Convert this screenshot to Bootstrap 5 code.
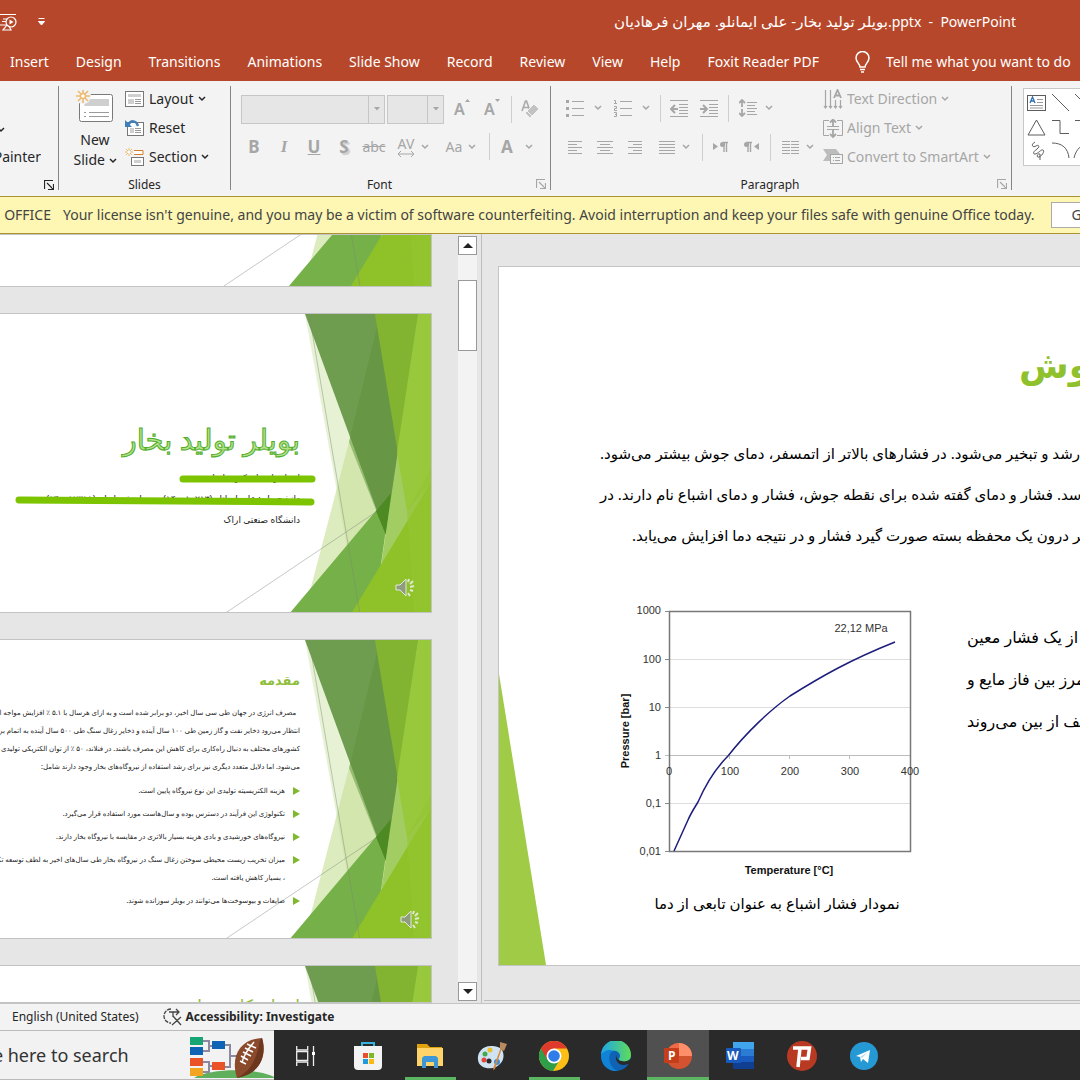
<!DOCTYPE html>
<html lang="en">
<head>
<meta charset="utf-8">
<meta name="viewport" content="width=device-width, initial-scale=1">
<title>PowerPoint</title>
<link href="https://cdn.jsdelivr.net/npm/bootstrap@5.3.0/dist/css/bootstrap.min.css" rel="stylesheet">
<style>
body{font-family:"Noto Sans","DejaVu Sans",sans-serif;font-size:14px;line-height:20px;color:#262626;background:#e6e6e6}
.btn{--bs-btn-font-size:14px;--bs-btn-line-height:20px;--bs-btn-padding-x:0px;--bs-btn-padding-y:0px;--bs-btn-border-width:0px;--bs-btn-border-radius:0;--bs-btn-color:inherit;--bs-btn-disabled-opacity:1;--bs-btn-disabled-color:#a6a6a6;white-space:nowrap}
svg{flex:none;display:block}
.app-head{background:#b7472a;color:#fff}
.title-row{height:43px}
.title-row .doc-name{margin-right:64px}
.doc-name span{font-size:15px}
.tab-row{height:38px;padding-left:10px;gap:27px}
.tell{gap:15px;margin-left:8px}
.ribbon{background:#f3f3f3;height:115px;padding:5px 0}
.rgroup{border-right:1px solid #868686;height:104px}
.rgroup>:first-child{min-height:0}
.rlabel{font-size:12px;line-height:16px;color:#262626;margin-bottom:-3px}
.g-clip{width:59px}.g-slides{width:172px}.g-font{width:320px}.g-para{width:461px}
.off{color:#a6a6a6}
.ib{width:30px;height:30px;display:flex;align-items:center;justify-content:center}
.ib.wide{width:48px;gap:6px}
.vsep{width:8px;height:27px;display:flex;justify-content:center}
.vsep::before{content:"";width:1px;background:#cfcfcf}
.combo{height:29px;border:1px solid #c6c6c6;background:#e6e6e6}
.combo select{appearance:none;border:0;background:transparent;min-width:0}
.combo span{width:16px;border-left:1px solid #c6c6c6;display:flex;align-items:center;justify-content:center}
.gl{font-size:17px;font-weight:700}
.shade{text-shadow:2px 2px 1px #ccc}
.shapes{height:78px;border:1px solid #c8c8c8;background:#fff}
.msg{background:#fdf7b3;border-top:1px solid #ac9135;border-bottom:1px solid #ac9135;height:38px;color:#444}
.msg .lead-word{width:51px}
.msg .btn{background:#fff;border:1px solid #ababab;height:26px;padding-left:19px;width:160px}
.pane{width:482px;border-right:1px solid #bdbdbd}
.thumbs{width:432px;gap:26px}
.thumb{height:300px;width:432px;background:#fff;border:1px solid #c3c3c3;border-left:0;overflow:hidden;position:relative;flex:none;direction:rtl}
.thumb .art{position:absolute;right:0;top:0}
.thumb.first{height:53px}.thumb.first .art{top:auto;bottom:0}
.thumb.last{flex:1 1 0;min-height:0}
.thumb .txt{position:relative;padding-right:131px;white-space:nowrap;color:#222}
.art-title{font-size:29px;line-height:40px;color:#b5e08a;-webkit-text-stroke:1px #4fae2c}
.tiny{font-size:9px;line-height:21px}
.thumb .green{color:#8fbe3a}
.para{font-size:7px;line-height:18px}
.para ul{list-style:none;padding:0;margin:0}
.para li{padding-right:15px;position:relative;margin-bottom:5px}
.para li::before{content:"";position:absolute;right:0;top:5px;border:4px solid transparent;border-left:7px solid #7fb92e;border-right:0}
.sbar{width:19px;background:#f3f3f3;margin:2px 0 2px}
.sbar .btn{height:19px;border:1px solid #999;background:#fff;display:flex;align-items:center;justify-content:center}
.sbar .grip{height:71px;border:1px solid #999;background:#fff;margin-top:25px}
.stage{padding:32px 0 0 16px;overflow:hidden;min-width:0}
.slide{height:700px;width:1244px;background:#fff;border:1px solid #c3c3c3;position:relative;color:#000}
.slide .wedge{position:absolute;left:0;bottom:0}
.rt{direction:rtl;white-space:nowrap;width:max-content}
.s-title{font-size:36px;line-height:60px;font-weight:700;color:#8fc12c;margin-left:520px;padding-top:68px}
.s-body{font-size:15px;line-height:41px;margin-left:101px;padding-top:38px}
.s-row{padding:44px 0 0 113px;gap:41px}
.s-side{font-size:16px;line-height:42px;padding-top:16px}
.s-cap{font-size:15px;line-height:28px}
.rule{border-top:1px solid #bdbdbd;margin:34px 0 0 -14px}
.status{height:27px;background:#f3f3f3;border-top:1px solid #c4c4c4;font-size:12px}
.task{height:50px;background:#2a2a2a}
.search{width:274px;margin-right:1px;background:#f2f2f2;border-top:1px solid #bbb;border-bottom:1px solid #bbb}
.search input{border:0;background:transparent;font-size:18px;width:215px;margin-left:-37px;padding:0;color:#333;outline:0}
.search input::placeholder{color:#333;opacity:1}
.slot{width:62px;display:flex;align-items:center;justify-content:center;position:relative;padding-top:1px}
.slot.run::after,.slot.live::after{content:"";position:absolute;left:6px;right:5px;bottom:0;height:3px;background:#5bb662}
.slot.live{background:#505050}.slot.live::after{left:0;right:0}
</style>
<script src="https://cdn.jsdelivr.net/npm/bootstrap@5.3.0/dist/js/bootstrap.bundle.min.js"></script>
</head>
<body class="vh-100 overflow-hidden d-flex flex-column">
<svg width="0" height="0" class="position-absolute" aria-hidden="true">
<symbol id="chev" viewBox="0 0 8 6"><path d="M1 1l3 3 3-3" fill="none" stroke="currentColor" stroke-width="1.5"/></symbol>
<symbol id="launch" viewBox="0 0 10 10"><path d="M.5 9V.5H9M9.5 4v5.500H4M3 3l6 6" fill="none" stroke="currentColor" stroke-width="1.2"/></symbol>
<symbol id="tri" viewBox="0 0 6 4"><path d="M0 0h6L3 3.500z" fill="currentColor"/></symbol>
<symbol id="facet" viewBox="0 0 432 300">
<path d="M381 0L350 128 305 300H385L432 150V0z" fill="#dcecbe"/>
<path d="M306 0L360 300H432V0z" fill="#c4df95" opacity=".4"/>
<path d="M290 300L392 179 375 300z" fill="#75b148"/>
<path d="M306 0H420L387 221z" fill="#6f9d50"/>
<path d="M381 0L350 128 387 221 420 0z" fill="#5f913a" opacity=".5"/>
<path d="M377 197L392 179 387 221z" fill="#4d8a23"/>
<path d="M419 0H432V300H375z" fill="#a2cd62"/>
<path d="M376 0H419L400 146z" fill="#82b431"/>
<path d="M419 0H432V168L408 197 398 138z" fill="#98c83b"/>
<path d="M432 168V300H352z" fill="#8fc228"/>
<path d="M408 197L432 155V300H415z" fill="#94c532" opacity=".6"/>
<path d="M310 0L361 300M225 300L377 198" stroke="#7d8a78" stroke-opacity=".45" fill="none"/>
</symbol>
<symbol id="speaker" viewBox="0 0 20 20"><path d="M1 7h4l6-6v17l-6-6H1z" fill="#8d9d7d" stroke="#e4e8dc"/><path d="M14 1l-1 3M18 3l-3 3M19 8l-4 1M18 13l-3-1M15 18l-2-3" stroke="#dfe8cf" stroke-width="2"/></symbol>
</svg>

<header class="app-head">
<div class="title-row d-flex align-items-center justify-content-between">
<div class="d-flex align-items-center" style="gap:21px">
<svg width="17" height="20" viewBox="0 0 17 20" fill="none" stroke="#fff" stroke-width="1.2"><path d="M0 2.500h16M3 7h4M2 9.500h4M0 13h7M7 13l-4 5h8l-2-4"/><circle cx="11" cy="10" r="5"/><path d="M9.500 7.500v5l4-2.500z" fill="#fff" stroke="none"/></svg>
<svg width="7" height="8" viewBox="0 0 6 8"><path d="M0 .5h6M0 3.500h6L3 7z" fill="#fff" stroke="#fff" stroke-width="1"/></svg>
</div>
<div class="doc-name"><span>بویلر تولید بخار- علی ایمانلو. مهران فرهادیان</span>.pptx&nbsp; -&nbsp; PowerPoint</div>
</div>
<nav class="tab-row d-flex align-items-center text-nowrap" aria-label="Ribbon tabs">
<button class="btn">Insert</button><button class="btn">Design</button><button class="btn">Transitions</button><button class="btn">Animations</button><button class="btn">Slide Show</button><button class="btn">Record</button><button class="btn">Review</button><button class="btn">View</button><button class="btn">Help</button><button class="btn">Foxit Reader PDF</button>
<button class="btn tell d-flex align-items-center"><svg width="17" height="22" viewBox="0 0 17 22" fill="none" stroke="#fff" stroke-width="1.500"><path d="M6 16c0-3-4-5-4-9a6.500 6.500 0 0 1 13 0c0 4-4 6-4 9zM6 18.500h5M7 21h3"/></svg>Tell me what you want to do</button>
</nav>
</header>

<section class="ribbon d-flex flex-nowrap overflow-hidden">
<div class="rgroup g-clip flex-shrink-0 position-relative d-flex flex-column align-items-start">
<svg width="8" height="6" class="mt-auto" style="margin-left:-3px"><use href="#chev"/></svg>
<div class="d-flex justify-content-end overflow-hidden" style="width:41px;margin-top:14px"><button class="btn">Format Painter</button></div>
<button class="btn align-self-end me-1" style="margin-top:13px" aria-label="Clipboard options"><svg width="10" height="10"><use href="#launch"/></svg></button>
</div>
<div class="rgroup g-slides flex-shrink-0 d-flex flex-column">
<div class="d-flex flex-grow-1">
<button class="btn d-flex flex-column align-items-center" style="width:66px;padding-left:6px">
<svg width="40" height="36" viewBox="0 0 40 36" class="mt-1"><rect x="4.500" y="4.500" width="33" height="27" rx="2" fill="#fff" stroke="#7a7a7a"/><path d="M11 9h23v7H9z" fill="#cfcfcf"/><path d="M9 22.500h2M14 22.500h20M9 26.500h2M14 26.500h20" stroke="#9a9a9a"/><circle cx="8" cy="6" r="8" fill="#f3f3f3"/><path d="M8-1v4M8 9v4M1 6h4M11 6h4M3 1l3 3M10 8l3 3M13 1l-3 3M6 8l-3 3" stroke="#edbb72" stroke-width="1.600"/><circle cx="8" cy="6" r="2.500" fill="#fff" stroke="#edbb72" stroke-width="1.500"/></svg>
<span class="mt-1">New</span><span>Slide <svg width="8" height="6" class="d-inline"><use href="#chev"/></svg></span></button>
<div class="d-flex flex-column align-items-start" style="gap:9px;padding-top:3px">
<button class="btn d-flex align-items-center gap-1"><svg width="20" height="18" viewBox="0 0 20 18"><rect x=".5" y="1.500" width="18" height="15" fill="#fff" stroke="#777"/><path d="M3 4h13v3H3zM3 9h6v5H3z" fill="#cfcfcf"/><path d="M10 9.500h6M10 11.500h6M10 13.500h6" stroke="#999"/></svg>Layout<svg width="8" height="6"><use href="#chev"/></svg></button>
<button class="btn d-flex align-items-center gap-1"><svg width="20" height="18" viewBox="0 0 20 18"><rect x="2.500" y="3.500" width="16" height="13" fill="#fff" stroke="#777"/><path d="M5 9h4v5H5z" fill="#cfcfcf"/><path d="M10 9.500h6M10 11.500h6M10 13.500h6" stroke="#999"/><path d="M13 7C11 1 6 1 3 6" fill="none" stroke="#3f7fb8" stroke-width="2.500"/><path d="M0 1v7h7z" fill="#3f7fb8"/></svg>Reset</button>
<button class="btn d-flex align-items-center gap-1"><svg width="20" height="18" viewBox="0 0 20 18"><path d="M9 2.500h9v4H9" fill="#fff" stroke="#d97c2b"/><rect x="6.500" y="9.500" width="12" height="8" fill="#fff" stroke="#777"/><path d="M9 12h7v3H9z" fill="#cfcfcf"/><path d="M4 0v8M0 4h8M1 1l6 6M7 1L1 7" stroke="#edbb72"/><circle cx="4" cy="4" r="1.500" fill="#fff"/></svg>Section<svg width="8" height="6"><use href="#chev"/></svg></button>
</div>
</div>
<div class="rlabel text-center">Slides</div>
</div>

<div class="rgroup g-font flex-shrink-0 d-flex flex-column off">
<div class="d-flex align-items-center" style="padding:8px 0 0 10px">
<div class="combo d-flex" style="width:144px"><select class="flex-grow-1" disabled aria-label="Font"></select><span><svg width="6" height="4"><use href="#tri"/></svg></span></div>
<div class="combo d-flex" style="width:57px;margin:0 3px 0 2px"><select class="flex-grow-1" disabled aria-label="Font size"></select><span><svg width="6" height="4"><use href="#tri"/></svg></span></div>
<button class="btn ib" disabled aria-label="Grow font"><span class="fs-6 fw-semibold">A</span><svg width="5" height="4" class="mb-3"><path d="M0 3h5L2.500 0z" fill="currentColor"/></svg></button>
<button class="btn ib" disabled aria-label="Shrink font"><span class="fs-6 fw-semibold">A</span><svg width="5" height="4" class="mb-3"><path d="M0 0h5L2.500 3z" fill="currentColor"/></svg></button>
<i class="vsep"></i>
<button class="btn ib" disabled aria-label="Clear formatting"><svg width="20" height="20" viewBox="0 0 20 20"><path d="M2 12L5.500 2h1L10 12M3.500 8.500h5" fill="none" stroke="#aaa" stroke-width="1.600"/><path d="M14 5l5 5-9 9-5-5z" fill="#c2c2c2" stroke="#f3f3f3"/><path d="M7 12l5 5" stroke="#f3f3f3"/></svg></button>
</div>
<div class="d-flex align-items-center flex-grow-1" style="padding:0 0 8px 8px">
<button class="btn ib gl" disabled>B</button><button class="btn ib gl fst-italic" disabled style="font-family:'Liberation Serif',serif">I</button><button class="btn ib gl text-decoration-underline" disabled>U</button><button class="btn ib gl shade" disabled>S</button><button class="btn ib text-decoration-line-through" disabled>abc</button>
<button class="btn ib wide" disabled aria-label="Character spacing"><span class="d-flex flex-column align-items-center"><span style="line-height:14px">AV</span><svg width="18" height="6" viewBox="0 0 18 6"><path d="M1 3h16M4 0L1 3l3 3M14 0l3 3-3 3" fill="none" stroke="currentColor"/></svg></span><svg width="8" height="6"><use href="#chev"/></svg></button>
<button class="btn ib wide" disabled>Aa<svg width="8" height="6"><use href="#chev"/></svg></button>
<i class="vsep"></i>
<button class="btn ib wide" disabled style="gap:12px"><span class="gl">A</span><svg width="8" height="6"><use href="#chev"/></svg></button>
</div>
<div class="d-flex align-items-center"><div class="rlabel text-center flex-grow-1" style="padding-right:8px">Font</div><button class="btn me-1" disabled aria-label="Font options"><svg width="10" height="10"><use href="#launch"/></svg></button></div>
</div>

<div class="rgroup g-para flex-shrink-0 d-flex flex-column off">
<div class="d-flex flex-grow-1" style="padding-left:9px">
<div class="d-flex flex-column" style="width:263px;padding-top:7px;gap:9px">
<div class="d-flex align-items-center">
<button class="btn ib wide" disabled aria-label="Bullets" style="gap:10px"><svg width="18" height="18" viewBox="0 0 18 18"><path d="M6 2.500h12M6 9.500h12M6 16.500h12" stroke="currentColor"/><path d="M0 1h3v3H0zM0 8h3v3H0zM0 15h3v3H0z" fill="currentColor"/></svg><svg width="8" height="6"><use href="#chev"/></svg></button>
<button class="btn ib wide" disabled aria-label="Numbering" style="gap:10px"><svg width="18" height="18" viewBox="0 0 18 18"><path d="M6 2.500h12M6 9.500h12M6 16.500h12M0 1.500h1.500V4M0 4.500h3M0 7.500h2.500v2H.5v2H3M0 13.500h2.500v4H0M1 15.500h1.500" fill="none" stroke="currentColor"/></svg><svg width="8" height="6"><use href="#chev"/></svg></button>
<i class="vsep"></i>
<button class="btn ib" disabled aria-label="Decrease indent"><svg width="18" height="17" viewBox="0 0 18 17"><path d="M0 .5h18M9 4.500h9M9 7.500h9M9 10.500h9M9 13.500h9M0 16.500h18" stroke="currentColor"/><path d="M8 9H2M5 5L1 9l4 4" fill="none" stroke="currentColor" stroke-width="2"/></svg></button>
<button class="btn ib" disabled aria-label="Increase indent"><svg width="18" height="17" viewBox="0 0 18 17"><path d="M0 .5h18M9 4.500h9M9 7.500h9M9 10.500h9M9 13.500h9M0 16.500h18" stroke="currentColor"/><path d="M0 9h6M3 5l4 4-4 4" fill="none" stroke="currentColor" stroke-width="2"/></svg></button>
<i class="vsep"></i>
<button class="btn ib wide" disabled aria-label="Line spacing" style="gap:8px"><svg width="18" height="18" viewBox="0 0 18 18"><path d="M8 3.500h10M8 6.500h8M8 9.500h10M8 12.500h8M8 15.500h10" stroke="currentColor"/><path d="M3 1v7M0 4l3-3 3 3M3 10v7M0 14l3 3 3-3" fill="none" stroke="currentColor" stroke-width="1.800"/></svg><svg width="8" height="6"><use href="#chev"/></svg></button>
</div>
<div class="d-flex align-items-center">
<button class="btn ib" disabled aria-label="Align left"><svg width="14" height="13"><path d="M0 .5h14M0 3.500h9M0 6.500h14M0 9.500h9M0 12.500h14" stroke="currentColor"/></svg></button>
<button class="btn ib" disabled aria-label="Center"><svg width="16" height="13"><path d="M0 .5h16M3 3.500h10M0 6.500h16M3 9.500h10M0 12.500h16" stroke="currentColor"/></svg></button>
<button class="btn ib" disabled aria-label="Align right"><svg width="14" height="13"><path d="M0 .5h14M5 3.500h9M0 6.500h14M5 9.500h9M0 12.500h14" stroke="currentColor"/></svg></button>
<button class="btn ib wide" disabled aria-label="Justify" style="gap:7px"><svg width="16" height="13"><path d="M0 .5h16M0 3.500h16M0 6.500h16M0 9.500h16M0 12.500h16" stroke="currentColor"/></svg><svg width="8" height="6"><use href="#chev"/></svg></button>
<i class="vsep"></i>
<button class="btn ib" disabled aria-label="Left to right"><svg width="16" height="12" viewBox="0 0 16 12"><path d="M0 2v7l5-3.500z" fill="currentColor"/><path d="M15 1.500H9.500M11 1v10M13.500 1v10" fill="none" stroke="currentColor" stroke-width="1.400"/><circle cx="9.500" cy="3.500" r="2.500" fill="currentColor"/></svg></button>
<button class="btn ib" disabled aria-label="Right to left"><svg width="16" height="12" viewBox="0 0 16 12"><path d="M16 2v7l-5-3.500z" fill="currentColor"/><path d="M9 1.500H3M5 1v10M7.500 1v10" fill="none" stroke="currentColor" stroke-width="1.400"/><circle cx="3.500" cy="3.500" r="2.500" fill="currentColor"/></svg></button>
<i class="vsep"></i>
<button class="btn ib wide" disabled aria-label="Columns" style="gap:7px"><svg width="17" height="13"><path d="M0 .5h8M0 3.500h8M0 6.500h8M0 9.500h8M0 12.500h8M9 .5h8M9 3.500h8M9 6.500h8M9 9.500h8M9 12.500h8" stroke="currentColor"/></svg><svg width="8" height="6"><use href="#chev"/></svg></button>
</div>
</div>
<div class="d-flex flex-column align-items-start" style="gap:9px;padding-top:3px">
<button class="btn d-flex align-items-center gap-1" disabled><svg width="20" height="20" viewBox="0 0 20 20"><path d="M2.500 1v18M7.500 1v18M12.500 11v8M17.500 11v8M1 17l1.500 2L4 17M6 17l1.500 2L9 17M11 17l1.500 2 1.500-2M16 17l1.500 2 1.500-2" fill="none" stroke="currentColor" stroke-width="1.200"/><path d="M11 9l3.500-8L18 9M12 6.500h5" fill="none" stroke="currentColor" stroke-width="1.800"/></svg>Text Direction<svg width="8" height="6"><use href="#chev"/></svg></button>
<button class="btn d-flex align-items-center gap-1" disabled><svg width="20" height="19" viewBox="0 0 20 19"><path d="M6 1.500H.5v15H6M14 1.500h5.500v15H14M4 7.500h12M4 10.500h12" fill="none" stroke="currentColor"/><path d="M10 7V1M7 3.500L10 .5l3 3M10 11v7M7 15l3 3 3-3" fill="none" stroke="currentColor" stroke-width="1.800"/></svg>Align Text<svg width="8" height="6"><use href="#chev"/></svg></button>
<button class="btn d-flex align-items-center gap-1" disabled><svg width="20" height="18" viewBox="0 0 20 18"><path d="M0 1h13l4 5H7v7H0l4-6z" fill="#bcbcbc"/><rect x="7.500" y="6.500" width="12" height="9" fill="#f3f3f3" stroke="currentColor"/><path d="M10 9.500h1M12 9.500h5M10 12.500h1M12 12.500h5" stroke="currentColor"/></svg>Convert to SmartArt<svg width="8" height="6"><use href="#chev"/></svg></button>
</div>
</div>
<div class="d-flex align-items-center"><div class="rlabel text-center flex-grow-1" style="padding-right:8px">Paragraph</div><button class="btn me-1" disabled aria-label="Paragraph options"><svg width="10" height="10"><use href="#launch"/></svg></button></div>
</div>
<div class="shapes flex-shrink-0" style="margin:2px 0 0 11px">
<svg width="130" height="76" viewBox="0 0 130 76" fill="none" stroke="#5c5c5c"><rect x="3.500" y="6.500" width="18" height="15"/><path d="M13 10.500h6M13 13.500h6M6 16.500h13M6 19h13" stroke="#999"/><path d="M6 14l2.500-6 2.500 6M7 12h3" stroke="#2f6fb4" stroke-width="1.300"/><path d="M28 5l17 17M51 5l17 17M12.500 31L4 46h17zM28 31.500h8v13h9M51 31.500h8v13h9M28 54c10 0 16 5 17 15M50 69c2-9 8-15 18-15M11 53c-5 3-2 6 1 4s4 1 1 3-5 5-2 5 6-5 8-4-1 6-4 7-2-4 1-3v6"/></svg>
</div>
</section>

<div class="msg d-flex align-items-center text-nowrap overflow-hidden">
<div class="lead-word text-end flex-shrink-0">OFFICE</div>
<div style="padding:0 17px 0 12px">Your license isn't genuine, and you may be a victim of software counterfeiting. Avoid interruption and keep your files safe with genuine Office today.</div>
<button class="btn flex-shrink-0 text-start">Get genuine Office</button>
</div>

<main class="d-flex flex-grow-1 overflow-hidden">
<aside class="pane flex-shrink-0 d-flex overflow-hidden">
<div class="thumbs d-flex flex-column">
<div class="thumb first"><svg class="art" width="432" height="300"><use href="#facet"/></svg></div>
<div class="thumb"><svg class="art" width="432" height="300"><use href="#facet"/></svg>
<div class="txt" style="padding-top:105px"><div class="art-title">بویلر تولید بخار</div>
<div class="tiny" style="margin-top:8px">استاد راهنما: دکتر ساسانی</div><div class="tiny">دانشجویان: علی ایمانلو (۱۴۰۰۱۰۲۱۳) - مهران فرهادیان (۱۴۰۰۱۲۳۱۱)</div><div class="tiny">دانشگاه صنعتی اراک</div></div>
<svg class="art" width="432" height="300" viewBox="0 0 432 300"><path d="M184 165H313M20 186L312 188" stroke="#7cc400" stroke-width="7" stroke-linecap="round"/><svg x="396" y="264" width="20" height="20"><use href="#speaker"/></svg></svg></div>
<div class="thumb"><svg class="art" width="432" height="300"><use href="#facet"/></svg>
<div class="txt para" style="padding-top:28px"><div class="green fw-bold" style="font-size:13px;line-height:24px">مقدمه</div>
<div style="margin:12px 0 6px"><div>&nbsp; مصرف انرژی در جهان طی سی سال اخیر، دو برابر شده است و به ازای هرسال با ۵.۱ ٪ افزایش مواجه است.</div><div>انتظار می‌رود ذخایر نفت و گاز زمین طی ۱۰۰ سال آینده و ذخایر زغال سنگ طی ۵۰۰ سال آینده به اتمام برسد.</div><div>کشورهای مختلف به دنبال راه‌کاری برای کاهش این مصرف باشند. در فنلاند، ۵۰ ٪ از توان الکتریکی تولیدی</div><div>می‌شود. اما دلایل متعدد دیگری نیز برای رشد استفاده از نیروگاه‌های بخار وجود دارند شامل:</div></div>
<ul><li>هزینه الکتریسیته تولیدی این نوع نیروگاه پایین است.</li><li>تکنولوژی این فرآیند در دسترس بوده و سال‌هاست مورد استفاده قرار می‌گیرد.</li><li>نیروگاه‌های خورشیدی و بادی هزینه بسیار بالاتری در مقایسه با نیروگاه بخار دارند.</li><li>میزان تخریب زیست محیطی سوختن زغال سنگ در نیروگاه بخار طی سال‌های اخیر به لطف توسعه تکنولوژی<br>، بسیار کاهش یافته است.</li><li>ضایعات و بیوسوخت‌ها می‌توانند در بویلر سوزانده شوند.</li></ul></div>
<svg class="art" width="432" height="300" viewBox="0 0 432 300"><svg x="401" y="270" width="20" height="20"><use href="#speaker"/></svg></svg></div>
<div class="thumb last"><svg class="art" width="432" height="300"><use href="#facet"/></svg><div class="txt green" style="padding-top:25px;font-size:17px;line-height:30px">اجزای کلی بویلر</div></div>
</div>
<div class="sbar d-flex flex-column ms-auto" style="margin-right:4px">
<button class="btn" aria-label="Scroll up"><svg width="10" height="5"><path d="M0 5h10L5 0z" fill="#222"/></svg></button>
<div class="grip"></div>
<button class="btn mt-auto" aria-label="Scroll down"><svg width="10" height="5"><path d="M0 0h10L5 5z" fill="#222"/></svg></button>
</div>
</aside>
<section class="stage flex-grow-1">
<div class="slide overflow-hidden">
<svg class="wedge" width="47" height="291" viewBox="0 0 47 291"><path d="M0 0L47 291H0z" fill="#a0cb46"/></svg>
<div class="rt s-title">نقطه جوش</div>
<div class="s-body">
<div class="rt">آب می‌رشد و تبخیر می‌شود. در فشارهای بالاتر از اتمسفر، دمای جوش بیشتر می‌شود.</div>
<div class="rt">می‌رسد. فشار و دمای گفته شده برای نقطه جوش، فشار و دمای اشباع نام دارند. در</div>
<div class="rt" style="margin-left:32px">اگر درون یک محفظه بسته صورت گیرد فشار و در نتیجه دما افزایش می‌یابد.</div>
</div>
<div class="s-row d-flex">
<figure class="m-0 d-flex flex-column align-items-center">
<svg width="314" height="286" viewBox="0 0 314 286" font-family="Liberation Sans, sans-serif" font-size="11" fill="#333">
<path d="M57 59.500h241M57 107.500h241M57 203.500h241" stroke="#dedede"/><path d="M53 155.500h245M117.500 155v4M177.500 155v4M237.500 155v4" stroke="#bdbdbd"/>
<rect x="57.500" y="11.500" width="241" height="240" fill="none" stroke="#777" stroke-width="1.500"/><path d="M53 11.500h4M53 59.500h4M53 107.500h4M53 203.500h4M53 251.500h4" stroke="#888"/>
<path d="M62 251L76 220C79 213 83 207 86 202C93 186 101 171 116 156C134 133 158 110 178 96C210 76 238 60 283 42" fill="none" stroke="#1d1d7c" stroke-width="1.500"/>
<g text-anchor="end"><text x="49" y="14">1000</text><text x="49" y="63">100</text><text x="49" y="111">10</text><text x="49" y="159">1</text><text x="49" y="207">0,1</text><text x="49" y="255">0,01</text></g>
<g text-anchor="middle"><text x="57" y="175">0</text><text x="118" y="175">100</text><text x="178" y="175">200</text><text x="238" y="175">300</text><text x="298" y="175">400</text><text x="249" y="32">22,12 MPa</text><g font-weight="700" fill="#111"><text x="177" y="274">Temperature [°C]</text><text transform="translate(17 131) rotate(-90)">Pressure [bar]</text></g></g>
</svg>
<figcaption class="rt s-cap" style="margin:3px 0 0 16px">نمودار فشار اشباع به عنوان تابعی از دما</figcaption>
</figure>
<div class="s-side"><div class="rt">بعد از یک فشار معین</div><div class="rt">مرز بین فاز مایع و</div><div class="rt">مختلف از بین می‌روند</div></div>
</div>
</div>
<div class="rule"></div>
</section>
</main>

<footer class="flex-shrink-0">
<div class="status d-flex align-items-center" style="padding-left:12px;gap:24px"><span>English (United States)</span>
<span class="d-flex align-items-center fw-bold gap-1"><svg width="19" height="18" viewBox="0 0 19 18" fill="none" stroke="#444" stroke-width="1.300"><path d="M8 1a7 7 0 0 0 0 14" stroke-dasharray="4 1"/><path d="M6 4h10M13 1l3 3-3 3M10 4v5M10 8l8 9M18 9l-9 8" /></svg>Accessibility: Investigate</span></div>
<div class="task d-flex overflow-hidden">
<div class="search d-flex align-items-center flex-shrink-0 overflow-hidden"><input type="text" aria-label="Search" placeholder="Type here to search">
<svg width="84" height="46" viewBox="0 0 84 46" class="ms-auto"><path d="M4 46C20 36 68 36 84 45v1z" fill="#5faf5c"/><path d="M13 9h6v10h-6M13 30h6v10h-6M19 14h5M19 34h5M35 13h5v22h-5M40 24h8" fill="none" stroke="#8b88a0" stroke-width="2"/><path d="M0 5h13v8H0z" fill="#17a673"/><path d="M0 15h13v8H0zM22 9h13v8H22z" fill="#0f63b5"/><path d="M0 26h13v8H0zM22 30h13v8H22z" fill="#ea5328"/><path d="M0 36h13v8H0z" fill="#f2a51e"/><path d="M47 46C40 24 50 7 72 6c6 18-3 36-25 40z" fill="#8b4a2b"/><path d="M70 8C66 32 58 40 47 46c22-4 30-20 25-40z" fill="#6d361f"/><path d="M64 10C58 17 53 24 52 31M57 12l9 4M55 16l8 4M53 20l8 4M51 24l7 4M50 29l6 3" stroke="#fff" stroke-width="1.500" fill="none"/></svg></div>
<button class="btn slot" aria-label="Task view"><svg width="20" height="20" viewBox="0 0 20 20" fill="none" stroke="#eee" stroke-width="1.300"><path d="M.7 0v4h11V0M.7 20v-4h11v4M.7 5.700h11v8.600H.7zM17.500 0v20"/><path d="M16 6h3v3h-3z" fill="#fff" stroke="none"/></svg></button>
<button class="btn slot" aria-label="Store"><svg width="28" height="30" viewBox="0 0 28 30"><path d="M8 6V2h12v4" fill="none" stroke="#35b3dc" stroke-width="2"/><path d="M0 5h28v20a4 4 0 0 1-4 4H4a4 4 0 0 1-4-4z" fill="#f3f3f3"/><path d="M9 12h5v5H9z" fill="#e8502b"/><path d="M15 12h5v5h-5z" fill="#7cb827"/><path d="M9 18h5v5H9z" fill="#1f9be0"/><path d="M15 18h5v5h-5z" fill="#fbb912"/></svg></button>
<button class="btn slot run" aria-label="File Explorer"><svg width="28" height="24" viewBox="0 0 28 24"><path d="M1 0h10l3 3h12v5H1z" fill="#e0a10f"/><path d="M1 4h26v18H1z" fill="#fdd36a"/><path d="M6 24V14l2-2h12l2 2v10h-4v-6h-8v6z" fill="#3c96d8"/></svg></button>
<button class="btn slot" aria-label="Paint"><svg width="30" height="28" viewBox="0 0 30 28"><path d="M14 4C5 4 0 11 1 18c1 8 11 10 18 7 8-4 9-12 6-17-2-3-6-4-11-4z" fill="#cfe3f2"/><circle cx="8" cy="12" r="2.500" fill="#46a84a"/><circle cx="13" cy="8" r="2.500" fill="#eac02c"/><circle cx="7" cy="18" r="2.500" fill="#e2473a"/><circle cx="20" cy="20" r="3" fill="#3d8fd8"/><circle cx="12" cy="19" r="2.500" fill="#2a2a2a"/><path d="M25 6l-7 21-2 1 1-4L24 5z" fill="#d8893c"/><path d="M23 0l7 2-3 7-4-2z" fill="#b98a5e"/></svg></button>
<button class="btn slot run" aria-label="Chrome"><svg width="30" height="30" viewBox="0 0 30 30"><circle cx="15" cy="15" r="15" fill="#fbbf16"/><path d="M15 15L2 7.500A15 15 0 0 0 14 30l7-11.500z" fill="#2f9e49"/><path d="M2 7.500A15 15 0 0 1 28 7.500H15L8.500 19z" fill="#df3b2d"/><circle cx="15" cy="15" r="7.500" fill="#fff"/><circle cx="15" cy="15" r="5.800" fill="#2f7de9"/></svg></button>
<button class="btn slot" aria-label="Edge"><svg width="30" height="30" viewBox="0 0 30 30"><defs><linearGradient id="eg"><stop stop-color="#1ea6e8"/><stop offset="1" stop-color="#5fdc58"/></linearGradient></defs><circle cx="15" cy="15" r="15" fill="#0f62b4"/><path d="M0 14A15 15 0 0 1 30 14c0 6-6 8-10 6-4-1-1-3-1-5 0-4-4-6-9-5-6 1-9 3-10 4z" fill="url(#eg)"/><path d="M0 14c3-5 9-6 12-4-4 2-5 8-2 14 2 4 5 5 7 6C7 31 0 24 0 14z" fill="#1183d6"/><path d="M16 12c-2 3 0 7 4 8 4 1 7 0 10-2v4l-3 1c-8 4-15-4-11-11z" fill="#2a2a2a"/></svg></button>
<button class="btn slot live" aria-label="PowerPoint"><svg width="28" height="28" viewBox="0 0 28 28"><circle cx="15" cy="14" r="13" fill="#d35230"/><path d="M15 1A13 13 0 0 1 28 14H15z" fill="#ff8f6b"/><path d="M15 1A13 13 0 0 0 2 14h13z" fill="#ed6c47"/><rect y="6" width="15" height="15" rx="1" fill="#c43e1c"/><text x="4" y="18" font-family="Open Sans, sans-serif" font-size="12" font-weight="700" fill="#fff">P</text></svg></button>
<button class="btn slot" aria-label="Word"><svg width="28" height="27" viewBox="0 0 28 27"><path d="M7 0h21v7H7z" fill="#41a5ee"/><path d="M7 7h21v7H7z" fill="#2b7cd3"/><path d="M7 14h21v6H7z" fill="#185abd"/><path d="M7 20h21v7H7z" fill="#103f91"/><rect y="6" width="15" height="15" rx="1" fill="#185abd"/><text x="1" y="18" font-family="Open Sans, sans-serif" font-size="12" font-weight="700" fill="#fff">W</text></svg></button>
<button class="btn slot" aria-label="Psiphon"><svg width="30" height="30" viewBox="0 0 30 30"><circle cx="15" cy="15" r="15" fill="#b83a22"/><path d="M6 7h16.500l-1.500 10.500h-7M13 7L11 26" fill="none" stroke="#fff" stroke-width="3.500"/></svg></button>
<button class="btn slot" aria-label="Telegram"><svg width="28" height="28" viewBox="0 0 28 28"><circle cx="14" cy="14" r="14" fill="#2499d4"/><path d="M6 14l14-6-2 13-5-4-2 3-1-5z" fill="#fff"/><path d="M10 15l8-5-6 6z" fill="#b9dcf0"/></svg></button>
</div>
</footer>
</body>
</html>
